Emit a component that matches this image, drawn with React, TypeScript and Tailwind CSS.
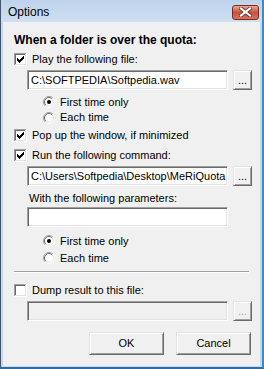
import React from 'react';

const font = { fontFamily: '"Liberation Sans", Arial, sans-serif' };

const CheckBox: React.FC<{ checked?: boolean }> = ({ checked }) => (
  <svg width="13" height="13" viewBox="0 0 13 13" className="shrink-0" shapeRendering="crispEdges">
    <rect x="0" y="0" width="13" height="13" fill="#ffffff" />
    <rect x="0" y="0" width="12" height="1" fill="#a0a0a0" />
    <rect x="0" y="0" width="1" height="12" fill="#a0a0a0" />
    <rect x="1" y="1" width="10" height="1" fill="#696969" />
    <rect x="1" y="1" width="1" height="10" fill="#696969" />
    <rect x="1" y="11" width="11" height="1" fill="#e3e3e3" />
    <rect x="11" y="1" width="1" height="11" fill="#e3e3e3" />
    {checked && (
      <path
        fill="#000"
        d="M9 3h1v3h-1zM8 4h1v3h-1zM7 5h1v3h-1zM6 6h1v3h-1zM5 7h1v3h-1zM4 6h1v3h-1zM3 5h1v3h-1z"
      />
    )}
  </svg>
);

const Radio: React.FC<{ checked?: boolean }> = ({ checked }) => (
  <svg width="12" height="12" viewBox="0 0 12 12" className="shrink-0">
    <circle cx="6" cy="6" r="5.5" fill="#ffffff" />
    <path d="M2.1 9.9A5.5 5.5 0 0 1 9.9 2.1" fill="none" stroke="#a0a0a0" strokeWidth="1" />
    <path d="M2.8 9.2A4.5 4.5 0 0 1 9.2 2.8" fill="none" stroke="#696969" strokeWidth="1" />
    <path d="M9.9 2.1A5.5 5.5 0 0 1 2.1 9.9" fill="none" stroke="#ffffff" strokeWidth="1" />
    <path d="M9.2 2.8A4.5 4.5 0 0 1 2.8 9.2" fill="none" stroke="#e3e3e3" strokeWidth="1" />
    {checked && <circle cx="6" cy="6" r="2" fill="#000" />}
  </svg>
);

const Field: React.FC<{ value?: string; disabled?: boolean }> = ({ value, disabled }) => (
  <div
    className={`h-[20px] w-[201px] shrink-0 overflow-hidden whitespace-nowrap border border-t-[#a0a0a0] border-l-[#a0a0a0] border-b-white border-r-white shadow-[inset_1px_1px_0_#696969,inset_-1px_-1px_0_#e3e3e3] pl-[3px] text-[11px] leading-[18px] ${disabled ? 'bg-[#f0f0f0]' : 'bg-white'}`}
  >
    {value}
  </div>
);

const Btn: React.FC<{ children: React.ReactNode; className?: string; disabled?: boolean }> = ({ children, className, disabled }) => (
  <div
    className={`flex shrink-0 items-center justify-center border border-t-[#e3e3e3] border-l-[#e3e3e3] border-b-[#696969] border-r-[#696969] bg-[#f0f0f0] shadow-[inset_1px_1px_0_#ffffff,inset_-1px_-1px_0_#a0a0a0] text-[11px] ${disabled ? 'text-[#a0a0a0]' : 'text-black'} ${className ?? ''}`}
  >
    {children}
  </div>
);

const Row: React.FC<{ children: React.ReactNode; className?: string }> = ({ children, className }) => (
  <div className={`flex items-center text-[11px] ${className ?? ''}`}>{children}</div>
);

export default function App() {
  return (
    <div
      style={font}
      className="w-[264px] h-[369px] flex flex-col bg-[#c4d8ee] border-l border-l-[#44556b] border-r-2 border-r-[#2f8fd0] border-b-2 border-b-[#2f6fa8] text-black overflow-hidden"
    >
      <div className="h-[22px] shrink-0 flex items-center justify-between pl-[7px] pr-[3px] bg-gradient-to-b from-[#bed3eb] to-[#cfdff2]">
        <span className="text-[12px] leading-none mt-[2px]">Options</span>
        <div className="w-[27px] h-[15px] mt-[2px] rounded-[3px] border border-[#7b2a1f] bg-gradient-to-b from-[#e9a895] via-[#c8503c] to-[#d8735f] flex items-center justify-center">
          <svg width="13" height="10" viewBox="0 0 13 10">
            <path d="M2 1.5l9 7M11 1.5l-9 7" stroke="#5a2a22" strokeWidth="3.6" strokeLinecap="square" />
            <path d="M2 1.5l9 7M11 1.5l-9 7" stroke="#ffffff" strokeWidth="2.2" strokeLinecap="square" />
          </svg>
        </div>
      </div>

      <div className="flex-1 mx-[2px] mb-[1px] bg-[#f0f0f0] flex flex-col pl-[11px]">
        <div className="mt-[11px] h-[14px] flex items-center text-[12px] font-bold">When a folder is over the quota:</div>

        <Row className="mt-[5px] h-[15px] gap-[5px]">
          <CheckBox checked />
          <span>Play the following file:</span>
        </Row>

        <div className="mt-[3px] flex ml-[13px] gap-[5px]">
          <Field value="C:\SOFTPEDIA\Softpedia.wav" />
          <Btn className="w-[19px] h-[20px]">...</Btn>
        </div>

        <Row className="mt-[4px] h-[16px] ml-[29px] gap-[5px]">
          <Radio checked />
          <span>First time only</span>
        </Row>
        <Row className="h-[15px] ml-[29px] gap-[5px]">
          <Radio />
          <span>Each time</span>
        </Row>

        <Row className="mt-[2px] h-[16px] gap-[5px]">
          <CheckBox checked />
          <span>Pop up the window, if minimized</span>
        </Row>
        <Row className="mt-[4px] h-[16px] gap-[5px]">
          <CheckBox checked />
          <span>Run the following command:</span>
        </Row>

        <div className="mt-[3px] flex ml-[13px] gap-[5px]">
          <Field value="C:\Users\Softpedia\Desktop\MeRiQuota" />
          <Btn className="w-[19px] h-[20px]">...</Btn>
        </div>

        <Row className="mt-[5px] h-[14px] ml-[15px]">With the following parameters:</Row>

        <div className="mt-[2px] flex ml-[13px]">
          <Field />
        </div>

        <Row className="mt-[6px] h-[16px] ml-[29px] gap-[5px]">
          <Radio checked />
          <span>First time only</span>
        </Row>
        <Row className="mt-[1px] h-[16px] ml-[29px] gap-[5px]">
          <Radio />
          <span>Each time</span>
        </Row>

        <div className="mt-[5px] w-[235px] h-[2px] border-t border-t-[#a0a0a0] border-b border-b-white" />

        <Row className="mt-[9px] h-[16px] gap-[5px]">
          <CheckBox />
          <span>Dump result to this file:</span>
        </Row>

        <div className="mt-[3px] flex ml-[13px] gap-[5px]">
          <Field disabled />
          <Btn disabled className="w-[19px] h-[20px]">...</Btn>
        </div>

        <div className="mt-[11px] flex gap-[12px] ml-[75px]">
          <Btn className="w-[75px] h-[23px]">OK</Btn>
          <Btn className="w-[75px] h-[23px]">Cancel</Btn>
        </div>
      </div>
    </div>
  );
}
